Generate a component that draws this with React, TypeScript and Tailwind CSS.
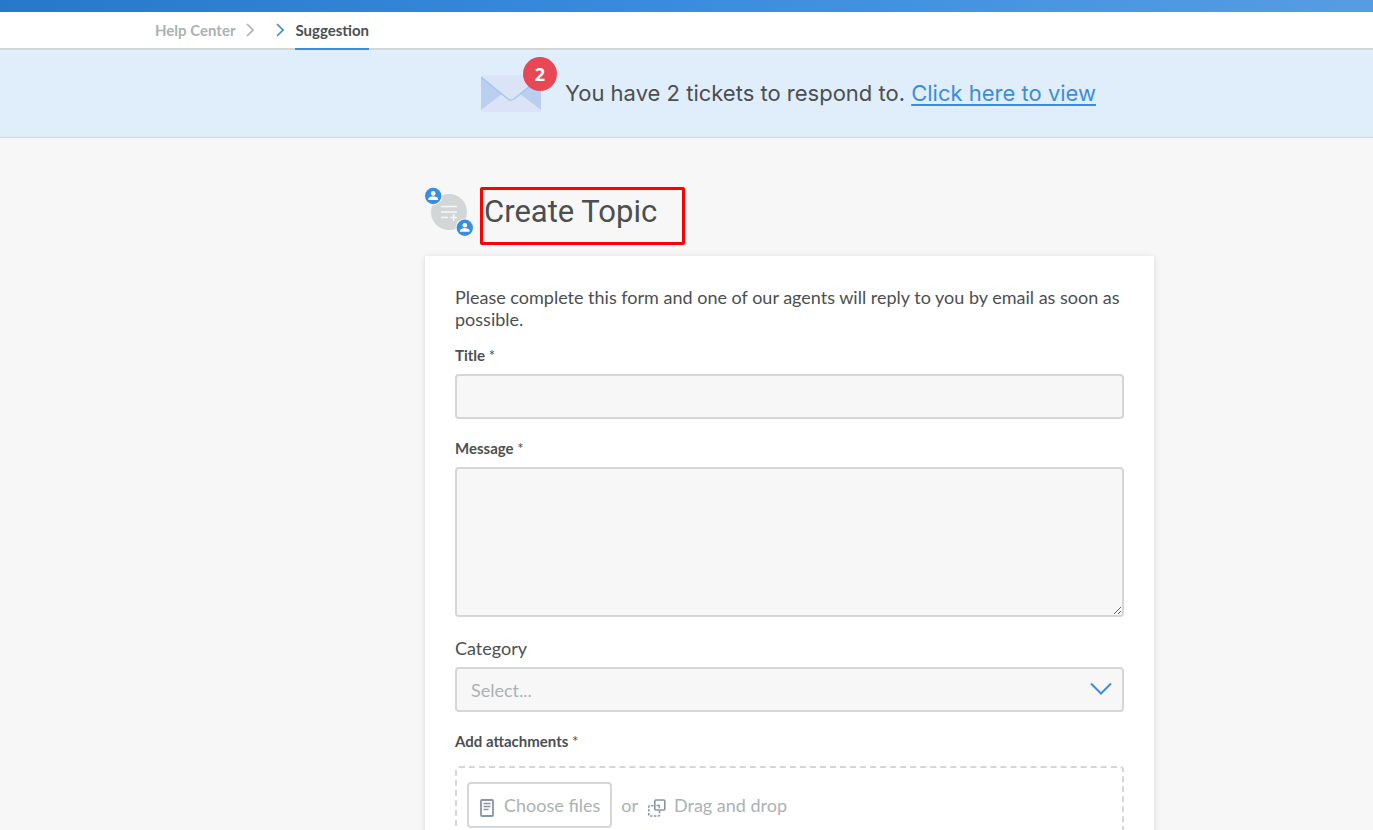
import type { ReactNode } from 'react';

const field =
  'block w-full rounded border-2 border-[#d3d7d6] bg-[#f7f7f7] px-3.5 text-lg text-[#4c4f50] outline-none focus:border-[#3a8dde]';

function FieldLabel({ htmlFor, children }: { htmlFor: string; children: ReactNode }) {
  return (
    <label htmlFor={htmlFor} className="block text-[15px] leading-5 font-bold text-[#4c4f50]">
      {children} <span className="font-normal">*</span>
    </label>
  );
}

function Chevron({ className }: { className: string }) {
  return (
    <svg viewBox="0 0 8 14" className={className} fill="none" stroke="currentColor" strokeWidth="1.6" aria-hidden="true">
      <path d="M1 1l6 6-6 6" />
    </svg>
  );
}

function Envelope() {
  return (
    <svg viewBox="0 0 60 38" className="h-[38px] w-[60px]" aria-hidden="true">
      <rect width="60" height="37" rx="2" fill="#dbe4f7" />
      <path d="M0 2l21 17L0 35z" fill="#bacff0" />
      <path d="M60 2L39 19l21 16z" fill="#bacff0" />
      <path d="M0 2l27 22q3 2 6 0L60 2" fill="none" stroke="#a5c6f0" strokeWidth="1.5" />
    </svg>
  );
}

function Person({ cx, cy }: { cx: number; cy: number }) {
  return (
    <g transform={`translate(${cx} ${cy})`}>
      <circle r="9.3" fill="#f7f7f7" />
      <circle r="8.2" fill="#3a8dde" />
      <circle cy="-2.6" r="2.3" fill="#fff" />
      <path d="M-4.8 4V2.9C-4.8 1-1.8.5 0 .5s4.8.5 4.8 2.4V4z" fill="#fff" />
    </g>
  );
}

function TopicIcon() {
  return (
    <svg viewBox="0 0 48 50" className="h-[50px] w-12 shrink-0" aria-hidden="true">
      <circle cx="24" cy="25" r="18" fill="#d2d6d6" />
      <path d="M16 19.5h16M16 25h16M16 30.5h7M25.5 30.5h6.5M28.7 27v7" stroke="#f7f7f7" strokeWidth="1.5" fill="none" />
      <Person cx={8.2} cy={9} />
      <Person cx={39.8} cy={40.8} />
    </svg>
  );
}

function FileIcon() {
  return (
    <svg viewBox="0 0 14 18" className="mt-1.5 h-[18px] w-3.5" fill="none" stroke="#8595a6" aria-hidden="true">
      <rect x="1" y="1" width="12" height="16" rx="1" strokeWidth="1.8" />
      <path d="M3.5 4.5h7M3.5 7.5h7M3.5 10.5h5" strokeWidth="1.4" />
    </svg>
  );
}

function DragIcon() {
  return (
    <svg viewBox="0 0 18 18" className="mt-1.5 h-[18px] w-[18px]" fill="none" stroke="#8595a6" aria-hidden="true">
      <rect x="6.8" y="1" width="10" height="10" rx="1" strokeWidth="1.6" />
      <path d="M8.5 6.500h2.8v2.8" strokeWidth="1.3" />
      <path d="M5.5 6.700H1.8a1 1 0 0 0-1 1v8.3a1 1 0 0 0 1 1H10.500a1 1 0 0 0 1-1V12" strokeWidth="1.6" strokeDasharray="2.4 1.4" />
    </svg>
  );
}

export default function App() {
  return (
    <div className="flex h-screen flex-col overflow-hidden bg-[#f7f7f7] font-['Lato',sans-serif] text-[#4c4f50]">
      <div className="h-3 shrink-0 bg-linear-to-r from-[#2678c9] via-[#3a8dde] to-[#559de3]" />

      <nav aria-label="Breadcrumb" className="flex h-[38px] shrink-0 border-b-2 border-[#d3d7d6] bg-white pl-[155px] text-[15px] font-bold">
        <a href="#help" className="flex items-center text-[#abb2b2]">
          Help Center
        </a>
        <div className="flex items-center pl-[11px] text-[#abb2b2]">
          <Chevron className="h-3.5 w-2" />
        </div>
        <div className="flex items-center pr-[11px] pl-[22px] text-[#3a8dde]">
          <Chevron className="h-3.5 w-2" />
        </div>
        <a href="#suggestion" aria-current="page" className="-mb-0.5 flex items-center border-b-2 border-[#3a8dde]">
          Suggestion
        </a>
      </nav>

      <section className="flex h-[88px] shrink-0 items-center justify-center border-b border-[#cdd6dd] bg-[#e0edfb] pb-0.5 pl-[204px]">
        <div className="relative mr-6 pt-0.5">
          <Envelope />
          <span className="absolute -top-4 -right-4 flex size-[34px] items-center justify-center rounded-full bg-[#e84855] font-['Open_Sans',sans-serif] text-lg font-bold text-white">
            2
          </span>
        </div>
        <p className="font-['Inter',sans-serif] text-[22px] leading-7">
          You have 2 tickets to respond to.{' '}
          <a href="#tickets" className="text-[#3a8dde] underline decoration-2 underline-offset-3">
            Click here to view
          </a>
        </p>
      </section>

      <main className="pt-[49px] pl-[206px]">
        <div className="mx-auto max-w-[729px]">
          <header className="flex items-start">
            <TopicIcon />
            <h1 className="ml-[7px] h-[58px] w-[205px] rounded-xs border-3 border-[#ff0000] pl-px font-['Roboto',sans-serif] text-[31px] leading-[44px] whitespace-nowrap">
              Create Topic
            </h1>
          </header>

          <form className="mt-[11px] bg-white px-[30px] pt-[30px] pb-8 shadow-[0_1px_6px_rgba(0,0,0,0.12)]">
            <p className="text-lg leading-[22px]">
              Please complete this form and one of our agents will reply to you by email as soon as possible.
            </p>

            <div className="mt-[15px]">
              <FieldLabel htmlFor="title">Title</FieldLabel>
              <input id="title" type="text" className={`${field} mt-[9px] h-[45px]`} />
            </div>

            <div className="mt-[19px]">
              <FieldLabel htmlFor="message">Message</FieldLabel>
              <textarea id="message" className={`${field} mt-[9px] h-[150px] resize-y`} />
            </div>

            <div className="mt-5">
              <label htmlFor="category" className="block text-lg leading-[22px]">
                Category
              </label>
              <div className="relative mt-2">
                <select id="category" defaultValue="" className={`${field} h-[45px] appearance-none text-[#abb2b2]`}>
                  <option value="">Select...</option>
                </select>
                <svg viewBox="0 0 22 14" className="pointer-events-none absolute top-[15px] right-3 h-3.5 w-[22px] text-[#3a8dde]" fill="none" stroke="currentColor" strokeWidth="2" aria-hidden="true">
                  <path d="M1 1.500l10 10 10-10" />
                </svg>
              </div>
            </div>

            <div className="mt-[19px]">
              <FieldLabel htmlFor="attachments">Add attachments</FieldLabel>
              <div className="mt-[15px] flex h-20 items-start rounded border-2 border-dashed border-[#d3d7d6] px-2.5 pt-3.5 text-lg text-[#abb2b2]">
                <button id="attachments" type="button" className="flex h-[46px] items-center gap-2.5 rounded border-2 border-[#d3d7d6] pr-2.5 pl-[11px]">
                  <FileIcon />
                  Choose files
                </button>
                <span className="flex h-[46px] items-center pl-[9px]">or</span>
                <span className="flex h-[46px] items-center gap-2 pl-2.5">
                  <DragIcon />
                  Drag and drop
                </span>
              </div>
            </div>
          </form>
        </div>
      </main>
    </div>
  );
}
